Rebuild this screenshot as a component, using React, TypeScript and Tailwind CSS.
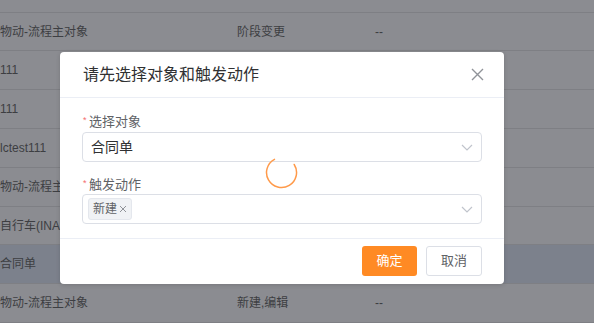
import React from "react";

interface Row {
  h: string;
  name: string;
  action: string;
  extra: string;
  active?: boolean;
}

const rows: Row[] = [
  { h: "h-[13px]", name: "", action: "", extra: "" },
  { h: "h-[38px]", name: "物动-流程主对象", action: "阶段变更", extra: "--" },
  { h: "h-[39px]", name: "111", action: "", extra: "" },
  { h: "h-[39px]", name: "111", action: "", extra: "" },
  { h: "h-[39px]", name: "lctest111", action: "", extra: "" },
  { h: "h-[39px]", name: "物动-流程主对象", action: "", extra: "" },
  { h: "h-[38px]", name: "自行车(INACTIVE)", action: "", extra: "" },
  { h: "h-[39px]", name: "合同单", action: "", extra: "", active: true },
  { h: "h-[39px]", name: "物动-流程主对象", action: "新建,编辑", extra: "--" },
];

const Chevron = () => (
  <svg width="12" height="7" viewBox="0 0 12 7" className="shrink-0">
    <path d="M1 1l5 5 5-5" fill="none" stroke="#c0c4cc" strokeWidth="1.2" />
  </svg>
);

const Label = ({ text }: { text: string }) => (
  <div className="flex items-center h-[18px] pl-[1px] text-[13px] text-[#606266]">
    <span className="text-[#f56c6c] text-[9px] w-[5px] mr-[1px] -mt-[3px] leading-none">*</span>
    <span>{text}</span>
  </div>
);

export default function App() {
  return (
    <div
      className="relative w-[594px] h-[323px] overflow-hidden bg-[#8b8c91] text-[12px] text-[#3d3e42]"
      style={{ fontFamily: '"Liberation Sans", "Noto Sans CJK SC", sans-serif' }}
    >
      {/* background table under the mask */}
      <div className="flex flex-col">
        {rows.map((r, i) => (
          <div
            key={i}
            className={`${r.h} flex items-center border-b border-[#7e7f84] shrink-0 ${
              r.active ? "bg-[#7c818c]" : ""
            }`}
          >
            <div className="w-[237px] pl-0 whitespace-nowrap overflow-hidden">{r.name}</div>
            <div className="w-[138px] whitespace-nowrap">{r.action}</div>
            <div className="whitespace-nowrap">{r.extra}</div>
          </div>
        ))}
      </div>

      {/* dialog */}
      <div className="absolute left-[60px] top-[52px] w-[444px] h-[232px] bg-white rounded-[4px] shadow-[0_1px_4px_rgba(0,0,0,0.15)] flex flex-col">
        <div className="h-[46px] flex items-center justify-between pl-[23px] pr-[20px] border-b border-[#ebeef5]">
          <span className="text-[16px] text-[#303133] pt-[1px]">请先选择对象和触发动作</span>
          <svg width="13" height="13" viewBox="0 0 13 13">
            <path d="M1 1l11 11M12 1L1 12" stroke="#909399" strokeWidth="1.4" />
          </svg>
        </div>

        <div className="px-[22px] pt-[15px] pb-[14px] flex flex-col">
          <Label text="选择对象" />
          <div className="mt-[1px] h-[30px] border border-[#dcdfe6] rounded-[4px] flex items-center justify-between pl-[8px] pr-[8px]">
            <span className="text-[14px] text-[#303133]">合同单</span>
            <Chevron />
          </div>

          <div className="mt-[14px]">
            <Label text="触发动作" />
          </div>
          <div className="h-[30px] border border-[#dcdfe6] rounded-[4px] flex items-center justify-between pl-[5px] pr-[8px]">
            <span className="h-[22px] pl-[4px] pr-[4px] flex items-center gap-[2px] bg-[#f0f2f5] border border-[#e4e7ed] rounded-[3px] text-[12px] text-[#606266]">
              新建
              <svg width="8" height="8" viewBox="0 0 8 8">
                <path d="M1 1l6 6M7 1l-6 6" stroke="#909399" strokeWidth="1" />
              </svg>
            </span>
            <Chevron />
          </div>
        </div>

        <div className="border-t border-[#ebeef5] flex justify-end gap-[9px] pt-[7px] pr-[22px]">
          <button className="w-[55px] h-[30px] rounded-[3px] bg-[#ff8a24] text-white text-[13px]">
            确定
          </button>
          <button className="w-[56px] h-[30px] rounded-[3px] bg-white border border-[#dcdfe6] text-[#606266] text-[13px]">
            取消
          </button>
        </div>
      </div>

      {/* loading spinner */}
      <svg className="absolute left-[265px] top-[156px]" width="33" height="33" viewBox="0 0 33 33">
        <path
          d="M29.2 8.5 A15 15 0 1 1 9.5 3.3"
          fill="none"
          stroke="#ff9a4a"
          strokeWidth="1.5"
          strokeLinecap="round"
        />
      </svg>
    </div>
  );
}
